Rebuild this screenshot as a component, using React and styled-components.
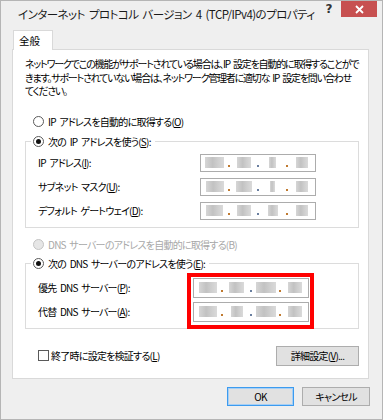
import React from 'react';
import styled, { createGlobalStyle } from 'styled-components';

const Global = createGlobalStyle`
    html, body {
        margin: 0;
        padding: 0;
        background: #efefef;
    }
    * {
        box-sizing: border-box;
    }
`;

const Window = styled.div`
    width: 383px;
    height: 420px;
    display: flex;
    flex-direction: column;
    background: #efefef;
    box-shadow: inset 0 0 0 1px #b5b5b5;
    font-family: "Noto Sans CJK JP", "Noto Sans", sans-serif;
    font-size: 10px;
    letter-spacing: -0.75px;
    word-spacing: 2px;
    font-feature-settings: "palt";
    color: #000;
`;

const TitleBar = styled.div`
    height: 29px;
    display: flex;
    align-items: flex-start;
    padding: 0 6px 0 18px;
`;

const Title = styled.div`
    flex: 1;
    min-width: 0;
    font-size: 11.5px;
    letter-spacing: -0.55px;
    line-height: 28px;
    white-space: nowrap;
    color: #1a1a1a;
`;

const Help = styled.div`
    width: 16px;
    margin: 1px 4px 0 0;
    font-family: "DejaVu Sans", sans-serif;
    font-weight: bold;
    font-size: 12px;
    letter-spacing: 0;
    line-height: 16px;
    text-align: center;
    color: #333;
`;

const Close = styled.div`
    width: 36px;
    height: 16px;
    margin-top: 1px;
    flex-shrink: 0;
    background: #c75050;
    display: flex;
    align-items: center;
    justify-content: center;
`;

const Body = styled.div`
    padding: 1px 14px 0 12px;
    display: flex;
    flex-direction: column;
`;

const Tab = styled.div`
    width: 40px;
    height: 20px;
    margin-left: 1px;
    margin-bottom: -1px;
    padding: 0 0 0 5px;
    line-height: 20px;
    font-size: 10.5px;
    letter-spacing: 0;
    background: #fff;
    border: 1px solid #d9d9d9;
    border-bottom: none;
    position: relative;
    z-index: 1;
`;

const Panel = styled.div`
    height: 330px;
    background: #fff;
    border: 1px solid #d9d9d9;
    padding: 7px 9px 0 12px;
    display: flex;
    flex-direction: column;
`;

const Desc = styled.div`
    line-height: 13.5px;
    letter-spacing: -1.2px;
    white-space: nowrap;
`;

const RadioRow = styled.label`
    display: flex;
    align-items: center;
    gap: 4px;
    height: 16px;
    margin-left: ${p => p.$inset || 0}px;
    margin-top: ${p => p.$top || 0}px;
    color: ${p => p.$disabled ? '#a8a8a8' : '#000'};
    white-space: nowrap;
`;

const Radio = styled.span`
    width: 11px;
    height: 11px;
    flex-shrink: 0;
    border-radius: 50%;
    border: 1px solid ${p => p.$disabled ? '#c4c4c4' : '#5a5a5a'};
    background: ${p => p.$disabled ? '#e6e6e6' : '#fff'};
    display: flex;
    align-items: center;
    justify-content: center;

    &::after {
        content: '';
        width: 5px;
        height: 5px;
        border-radius: 50%;
        background: ${p => p.$checked ? '#111' : 'transparent'};
    }
`;

const Group = styled.fieldset`
    margin: ${p => p.$top || 0}px 0 0 0;
    padding: ${p => p.$padTop || 0}px 0 ${p => p.$padBottom || 0}px 5px;
    border: 1px solid #dcdcdc;
    min-width: 0;
    display: flex;
    flex-direction: column;
    gap: 6px;
`;

const Legend = styled.legend`
    padding: 0 4px 0 2px;
`;

const FieldRow = styled.div`
    display: flex;
    align-items: center;
    padding-left: 7px;
`;

const Label = styled.div`
    width: ${p => p.$w}px;
    white-space: nowrap;
`;

const IpBox = styled.div`
    width: 116px;
    height: ${p => p.$h || 18}px;
    border: 1px solid #acacac;
    background: #fff;
    display: flex;
    align-items: center;
`;

const Octet = styled.div`
    flex: 1;
    display: flex;
    justify-content: center;
`;

const Blur = styled.span`
    width: ${p => p.$w}px;
    height: 11px;
    background: linear-gradient(90deg, #d6d6d6 0%, #c2c2c2 40%, #cfcfcf 70%, #dadada 100%);
    filter: blur(0.6px);
`;

const Dot = styled.span`
    width: 2px;
    height: 2px;
    margin-top: 6px;
    background: ${p => p.$c || '#7a6a55'};
`;

const DnsRow = styled.div`
    display: flex;
    padding-left: 7px;
`;

const DnsLabels = styled.div`
    width: 149px;
    display: flex;
    flex-direction: column;
    padding-top: 5px;
    gap: 4px;
`;

const DnsLabel = styled.div`
    height: 20px;
    line-height: 20px;
    white-space: nowrap;
`;

const Highlight = styled.div`
    border: 4px solid #f00;
    padding: 1px 1px 3px 2px;
    display: flex;
    flex-direction: column;
    gap: 4px;
    margin-bottom: -1px;
    position: relative;
`;

const BottomRow = styled.div`
    display: flex;
    align-items: center;
    justify-content: space-between;
    margin: 17px 0 0 13px;
`;

const Check = styled.label`
    display: flex;
    align-items: center;
    gap: 2px;
    white-space: nowrap;
`;

const Box = styled.span`
    width: 11px;
    height: 11px;
    border: 1px solid #5a5a5a;
    background: #fff;
`;

const Button = styled.button`
    width: ${p => p.$w}px;
    height: ${p => p.$h || 19}px;
    padding: 0;
    font: inherit;
    letter-spacing: inherit;
    word-spacing: inherit;
    font-feature-settings: inherit;
    color: #000;
    background: #e1e1e1;
    border: 1px solid ${p => p.$primary ? '#3c9bef' : '#adadad'};
    box-shadow: ${p => p.$primary ? 'inset 0 0 0 1px #a6cff5' : 'none'};
`;

const Footer = styled.div`
    display: flex;
    justify-content: flex-end;
    gap: 8px;
    padding: 8px 13px 0 0;
`;

const Key = styled.span`
    text-decoration: underline;
    text-underline-offset: 1px;
`;

const IpField = ({ octets, h }) => (
    <IpBox $h={h}>
        {octets.map((w, i) => (
            <React.Fragment key={i}>
                {i > 0 && <Dot $c={i % 2 ? '#c07a30' : '#6a7fa0'} />}
                <Octet><Blur $w={w} /></Octet>
            </React.Fragment>
        ))}
    </IpBox>
);

export default function App() {
    return (
        <Window>
            <Global />
            <TitleBar>
                <Title>インターネット プロトコル バージョン 4 (TCP/IPv4)のプロパティ</Title>
                <Help>?</Help>
                <Close>
                    <svg width="9" height="9" viewBox="0 0 9 9">
                        <path d="M1 1 L8 8 M8 1 L1 8" stroke="#fff" strokeWidth="1.8" />
                    </svg>
                </Close>
            </TitleBar>
            <Body>
                <Tab>全般</Tab>
                <Panel>
                    <Desc>
                        ネットワークでこの機能がサポートされている場合は、IP 設定を自動的に取得することがで<br />
                        きます。サポートされていない場合は、ネットワーク管理者に適切な IP 設定を問い合わせ<br />
                        てください。
                    </Desc>
                    <RadioRow $inset={8} $top={16}>
                        <Radio />
                        <span>IP アドレスを自動的に取得する(<Key>O</Key>)</span>
                    </RadioRow>
                    <Group $top={4} $padTop={4} $padBottom={7}>
                        <Legend>
                            <RadioRow>
                                <Radio $checked />
                                <span>次の IP アドレスを使う(<Key>S</Key>):</span>
                            </RadioRow>
                        </Legend>
                        <FieldRow>
                            <Label $w={162}>IP アドレス(<Key>I</Key>):</Label>
                            <IpField octets={[19, 14, 7, 12]} />
                        </FieldRow>
                        <FieldRow>
                            <Label $w={162}>サブネット マスク(<Key>U</Key>):</Label>
                            <IpField octets={[18, 16, 5, 12]} />
                        </FieldRow>
                        <FieldRow>
                            <Label $w={162}>デフォルト ゲートウェイ(<Key>D</Key>):</Label>
                            <IpField octets={[17, 14, 10, 12]} />
                        </FieldRow>
                    </Group>
                    <RadioRow $inset={8} $top={9} $disabled>
                        <Radio $disabled />
                        <span>DNS サーバーのアドレスを自動的に取得する(B)</span>
                    </RadioRow>
                    <Group $top={3} $padTop={1} $padBottom={0}>
                        <Legend>
                            <RadioRow>
                                <Radio $checked />
                                <span>次の DNS サーバーのアドレスを使う(<Key>E</Key>):</span>
                            </RadioRow>
                        </Legend>
                        <DnsRow>
                            <DnsLabels>
                                <DnsLabel>優先 DNS サーバー(<Key>P</Key>):</DnsLabel>
                                <DnsLabel>代替 DNS サーバー(<Key>A</Key>):</DnsLabel>
                            </DnsLabels>
                            <Highlight>
                                <IpField octets={[18, 15, 20, 14]} h={20} />
                                <IpField octets={[18, 12, 20, 14]} h={20} />
                            </Highlight>
                        </DnsRow>
                    </Group>
                    <BottomRow>
                        <Check>
                            <Box />
                            <span>終了時に設定を検証する(<Key>L</Key>)</span>
                        </Check>
                        <Button $w={83} $h={20}>詳細設定(<Key>V</Key>)...</Button>
                    </BottomRow>
                </Panel>
            </Body>
            <Footer>
                <Button $w={67} $primary>OK</Button>
                <Button $w={68}>キャンセル</Button>
            </Footer>
        </Window>
    );
}
